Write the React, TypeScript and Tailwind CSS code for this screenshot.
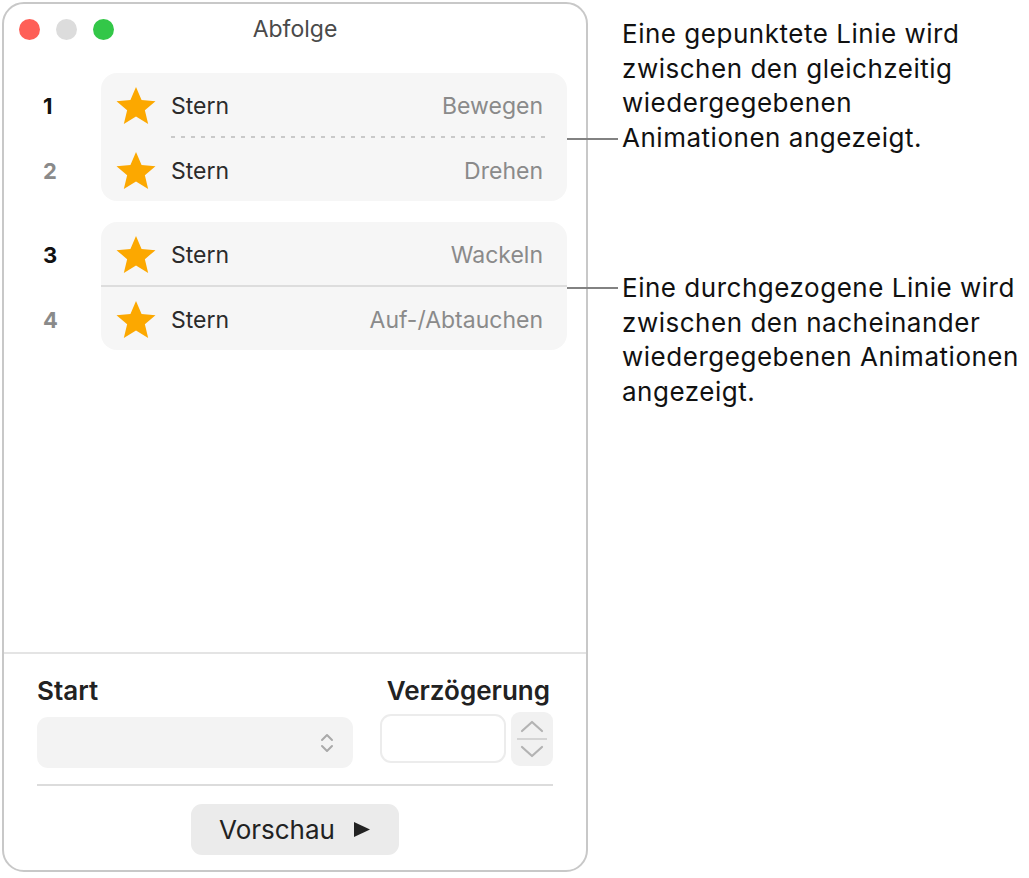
const font = { fontFamily: 'Inter, "Noto Sans", sans-serif' };

type Step = { num: string; effect: string; active: boolean };

const Star = () => (
  <svg width="42" height="40" viewBox="0 0 24 23" className="shrink-0">
    <polygon
      points="12,0.6 15.2,8.1 23.2,8.7 17.1,13.9 19,21.9 12,17.6 5,21.9 6.9,13.9 0.8,8.7 8.8,8.1"
      fill="#FCA800"
    />
  </svg>
);

const Row = ({ step }: { step: Step }) => (
  <div className="flex h-[63px] items-center pt-[3px]">
    <div
      className={`w-[64px] shrink-0 pl-[6px] text-[22px] font-bold ${
        step.active ? "text-[#111111]" : "text-[#8a8a8a]"
      }`}
    >
      {step.num}
    </div>
    <div className="flex flex-1 items-center pl-[14px] pr-[24px]">
      <Star />
      <span className="ml-[14px] text-[23px] text-[#2b2b2b]">Stern</span>
      <span className="ml-auto text-[23px] text-[#8a8a8a]">{step.effect}</span>
    </div>
  </div>
);

// group of animations; "together" draws the dotted divider, otherwise a solid one
const Group = ({ steps, together }: { steps: Step[]; together: boolean }) => (
  <div className="relative">
    <div className="absolute inset-y-0 left-[64px] right-0 rounded-[16px] bg-[#f6f6f6]" />
    <div className="relative">
      <Row step={steps[0]} />
      {together ? (
        <div className="ml-[134px] mr-[22px] h-[2px] bg-[repeating-linear-gradient(90deg,#c9c9c9_0_4px,transparent_4px_10px)]" />
      ) : (
        <div className="ml-[64px] h-[2px] bg-[#dddddd]" />
      )}
      <Row step={steps[1]} />
    </div>
  </div>
);

const UpDown = () => (
  <svg width="16" height="22" viewBox="0 0 16 22" fill="none" stroke="#a9a9a9" strokeWidth="2" strokeLinecap="round" strokeLinejoin="round">
    <path d="M3 8 L8 3 L13 8" />
    <path d="M3 14 L8 19 L13 14" />
  </svg>
);

const Stepper = () => (
  <div className="flex h-[54px] w-[42px] flex-col items-center justify-center rounded-[9px] bg-[#f1f1f1]">
    <svg width="26" height="14" viewBox="0 0 26 14" fill="none" stroke="#b3b3b3" strokeWidth="2.2" strokeLinecap="round" strokeLinejoin="round">
      <path d="M3 12 L13 3 L23 12" />
    </svg>
    <div className="my-[5px] h-[2px] w-[30px] bg-[#d4d4d4]" />
    <svg width="26" height="14" viewBox="0 0 26 14" fill="none" stroke="#b3b3b3" strokeWidth="2.2" strokeLinecap="round" strokeLinejoin="round">
      <path d="M3 2 L13 11 L23 2" />
    </svg>
  </div>
);

const Window = () => (
  <div className="ml-[2px] mt-[2px] flex h-[870px] w-[586px] shrink-0 flex-col rounded-[22px] border-2 border-[#c8c8c8] bg-white">
    {/* title bar */}
    <div className="relative flex h-[50px] items-center px-[15px]">
      <div className="flex gap-[16px]">
        <span className="h-[21px] w-[21px] rounded-full bg-[#fe5f57]" />
        <span className="h-[21px] w-[21px] rounded-full bg-[#dcdcdc]" />
        <span className="h-[21px] w-[21px] rounded-full bg-[#33c748]" />
      </div>
      <div className="absolute inset-x-0 text-center text-[23px] text-[#4a4a4a]">Abfolge</div>
    </div>

    <div className="flex flex-col gap-[21px] pl-[33px] pr-[19px] pt-[19px]">
      <Group
        together
        steps={[
          { num: "1", effect: "Bewegen", active: true },
          { num: "2", effect: "Drehen", active: false },
        ]}
      />
      <Group
        together={false}
        steps={[
          { num: "3", effect: "Wackeln", active: true },
          { num: "4", effect: "Auf-/Abtauchen", active: false },
        ]}
      />
    </div>

    <div className="flex-1" />

    <div className="h-[218px] border-t-2 border-[#e4e4e4] px-[33px]">
      <div className="mt-[21px] flex h-[30px] items-center justify-between text-[26px] font-semibold text-[#222222]">
        <span>Start</span>
        <span className="mr-[3px]">Verzögerung</span>
      </div>
      <div className="mt-[7px] flex h-[56px] items-start">
        <div className="mt-[5px] flex h-[51px] w-[316px] items-center justify-end rounded-[11px] bg-[#f3f3f3] pr-[18px]">
          <UpDown />
        </div>
        <div className="ml-[27px] mt-[2px] h-[49px] w-[126px] rounded-[11px] border-2 border-[#ececec] bg-white" />
        <div className="ml-[5px]">
          <Stepper />
        </div>
      </div>
      <div className="mt-[16px] h-[1.5px] bg-[#dcdcdc]" />
      <div className="mt-[18px] flex justify-center">
        <button className="flex h-[51px] w-[208px] items-center justify-center gap-[18px] rounded-[11px] bg-[#ebebeb] text-[26px] text-[#222222]">
          <span>Vorschau</span>
          <svg width="18" height="17" viewBox="0 0 18 17">
            <path d="M1 1 L17 8.5 L1 16 Z" fill="#222222" />
          </svg>
        </button>
      </div>
    </div>
  </div>
);

export default function App() {
  return (
    <div className="relative flex h-[878px] w-[1029px] bg-white" style={font}>
      <Window />

      <div className="pl-[34px] text-[26px] leading-[34.5px] tracking-[0.02em] text-[#111111] whitespace-nowrap">
        <p className="mt-[17px]">
          Eine gepunktete Linie wird
          <br />
          zwischen den gleichzeitig
          <br />
          wiedergegebenen
          <br />
          Animationen angezeigt.
        </p>
        <p className="mt-[116px]">
          Eine durchgezogene Linie wird
          <br />
          zwischen den nacheinander
          <br />
          wiedergegebenen Animationen
          <br />
          angezeigt.
        </p>
      </div>

      {/* leader lines from the dividers to the notes */}
      <div className="absolute left-[567px] top-[138px] h-[2px] w-[51px] bg-[#828282]" />
      <div className="absolute left-[567px] top-[287px] h-[2px] w-[51px] bg-[#828282]" />
    </div>
  );
}
